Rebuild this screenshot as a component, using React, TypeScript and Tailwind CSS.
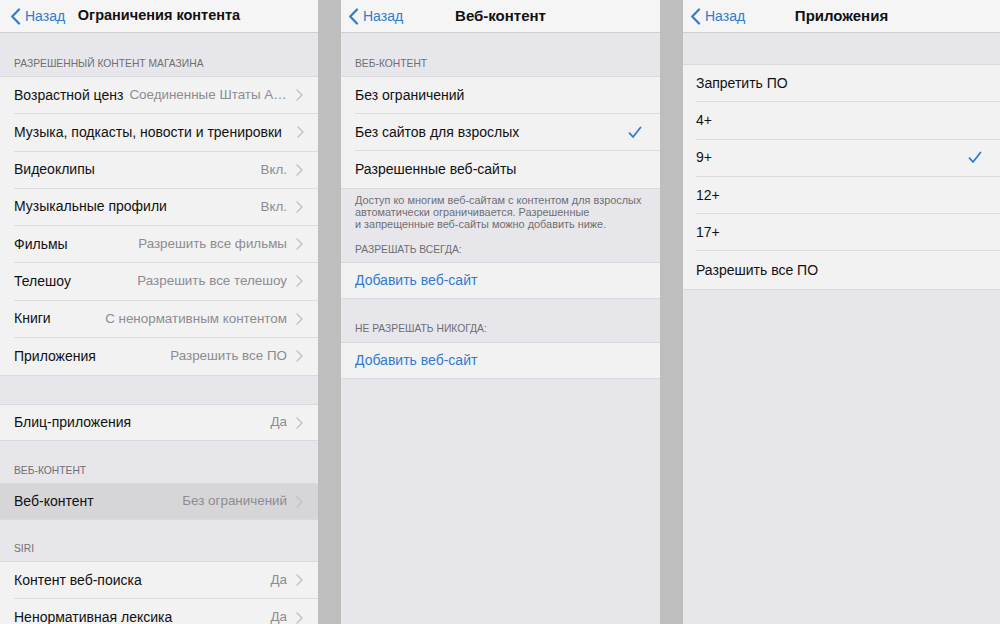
import React from 'react';

const FONT = { fontFamily: '"Liberation Sans", Arial, sans-serif' };

function BackChevron() {
  return (
    <svg width="11" height="17" viewBox="0 0 11 17" className="shrink-0">
      <path d="M9 1.5 L2.2 8.5 L9 15.5" fill="none" stroke="#2f7bcc" strokeWidth="2.2" strokeLinecap="round" strokeLinejoin="round" />
    </svg>
  );
}

function Disclosure() {
  return (
    <svg width="7" height="12" viewBox="0 0 7 12" className="ml-[9px] shrink-0">
      <path d="M1 1 L6 6 L1 11" fill="none" stroke="#c3c3c8" strokeWidth="1.5" strokeLinecap="round" strokeLinejoin="round" />
    </svg>
  );
}

function Check() {
  return (
    <svg width="14" height="13" viewBox="0 0 14 13" className="mr-[3px] shrink-0">
      <path d="M1.5 7.2 L5 11 L12.5 1.5" fill="none" stroke="#2f7bcc" strokeWidth="1.8" strokeLinecap="round" strokeLinejoin="round" />
    </svg>
  );
}

function NavBar({ title, backPad, titleSize = 'text-[15px]' }: { title: string; backPad: string; titleSize?: string }) {
  return (
    <div className="grid h-[33px] shrink-0 grid-cols-[1fr_auto_1fr] items-center border-b border-[#cfcfd3] bg-[#f5f5f6]">
      <div className={`flex items-center gap-[4px] ${backPad}`}>
        <BackChevron />
        <span className="text-[14px] text-[#2f7bcc]">Назад</span>
      </div>
      <div className={`${titleSize} font-bold text-[#111]`}>{title}</div>
      <div />
    </div>
  );
}

function Header({ children, cls }: { children: React.ReactNode; cls: string }) {
  return (
    <div className={`flex shrink-0 items-end px-[14px] text-[10.3px] leading-[12px] uppercase text-[#6e6e73] ${cls}`}>
      {children}
    </div>
  );
}

type Row = {
  label: string;
  value?: string;
  chevron?: boolean;
  check?: boolean;
  blue?: boolean;
  active?: boolean;
};

function Group({ rows, h, inset = 'pl-[14px]' }: { rows: Row[]; h: string; inset?: string }) {
  return (
    <div className="shrink-0 border-y border-[#dadade] bg-[#f2f2f3]">
      {rows.map((r, i) => (
        <div key={i} className={`${inset} ${r.active ? 'bg-[#d6d6d8]' : ''}`}>
          <div
            className={`flex ${h} items-center pr-[15px] ${i < rows.length - 1 ? 'border-b border-[#dcdce0]' : ''}`}
          >
            <span className={`shrink-0 text-[14px] ${r.blue ? 'text-[#2f7bcc]' : 'text-[#111]'}`}>{r.label}</span>
            <span className="ml-[6px] min-w-0 flex-1 truncate text-right text-[13.4px] text-[#8c8c91]">
              {r.value ?? ''}
            </span>
            {r.chevron && <Disclosure />}
            {r.check && <Check />}
          </div>
        </div>
      ))}
    </div>
  );
}

const storeRows: Row[] = [
  { label: 'Возрастной ценз', value: 'Соединенные Штаты Америки', chevron: true },
  { label: 'Музыка, подкасты, новости и тренировки', chevron: true },
  { label: 'Видеоклипы', value: 'Вкл.', chevron: true },
  { label: 'Музыкальные профили', value: 'Вкл.', chevron: true },
  { label: 'Фильмы', value: 'Разрешить все фильмы', chevron: true },
  { label: 'Телешоу', value: 'Разрешить все телешоу', chevron: true },
  { label: 'Книги', value: 'С ненормативным контентом', chevron: true },
  { label: 'Приложения', value: 'Разрешить все ПО', chevron: true },
];

export default function App() {
  return (
    <div className="flex h-[624px] w-[1000px] overflow-hidden bg-[#bebebe]" style={FONT}>
      {/* Left: Ограничения контента */}
      <div className="flex w-[318px] shrink-0 flex-col overflow-hidden bg-[#e7e7eb]">
        <NavBar title="Ограничения контента" backPad="pl-[10px]" titleSize="text-[14.5px]" />
        <Header cls="h-[43px] pb-[6px]">Разрешенный контент магазина</Header>
        <Group rows={storeRows} h="h-[37.25px]" />
        <div className="h-[28px] shrink-0" />
        <Group rows={[{ label: 'Блиц-приложения', value: 'Да', chevron: true }]} h="h-[35px]" />
        <Header cls="h-[42px] pb-[6px]">Веб-контент</Header>
        <Group rows={[{ label: 'Веб-контент', value: 'Без ограничений', chevron: true, active: true }]} h="h-[35px]" />
        <Header cls="h-[41px] pb-[6px]">Siri</Header>
        <Group
          rows={[
            { label: 'Контент веб-поиска', value: 'Да', chevron: true },
            { label: 'Ненормативная лексика', value: 'Да', chevron: true },
          ]}
          h="h-[37px]"
        />
      </div>

      <div className="w-[23px] shrink-0" />

      {/* Middle: Веб-контент */}
      <div className="flex w-[319px] shrink-0 flex-col overflow-hidden bg-[#e7e7eb]">
        <NavBar title="Веб-контент" backPad="pl-[7px]" />
        <Header cls="h-[43px] pb-[6px]">Веб-контент</Header>
        <Group
          rows={[
            { label: 'Без ограничений' },
            { label: 'Без сайтов для взрослых', check: true },
            { label: 'Разрешенные веб-сайты' },
          ]}
          h="h-[37px]"
        />
        <div className="shrink-0 px-[14px] pt-[5px] text-[10.9px] leading-[12px] text-[#6e6e73]">
          Доступ ко многим веб-сайтам с контентом для взрослых
          <br />
          автоматически ограничивается. Разрешенные
          <br />
          и запрещенные веб-сайты можно добавить ниже.
        </div>
        <Header cls="h-[32px] pb-[6px]">Разрешать всегда:</Header>
        <Group rows={[{ label: 'Добавить веб-сайт', blue: true }]} h="h-[35px]" />
        <Header cls="h-[43px] pb-[7px]">Не разрешать никогда:</Header>
        <Group rows={[{ label: 'Добавить веб-сайт', blue: true }]} h="h-[35px]" />
      </div>

      <div className="w-[23px] shrink-0" />

      {/* Right: Приложения */}
      <div className="flex w-[317px] shrink-0 flex-col overflow-hidden bg-[#e7e7eb]">
        <NavBar title="Приложения" backPad="pl-[7px]" />
        <div className="h-[31px] shrink-0" />
        <Group
          rows={[
            { label: 'Запретить ПО' },
            { label: '4+' },
            { label: '9+', check: true },
            { label: '12+' },
            { label: '17+' },
            { label: 'Разрешить все ПО' },
          ]}
          h="h-[37.3px]"
          inset="pl-[13px]"
        />
      </div>
    </div>
  );
}
